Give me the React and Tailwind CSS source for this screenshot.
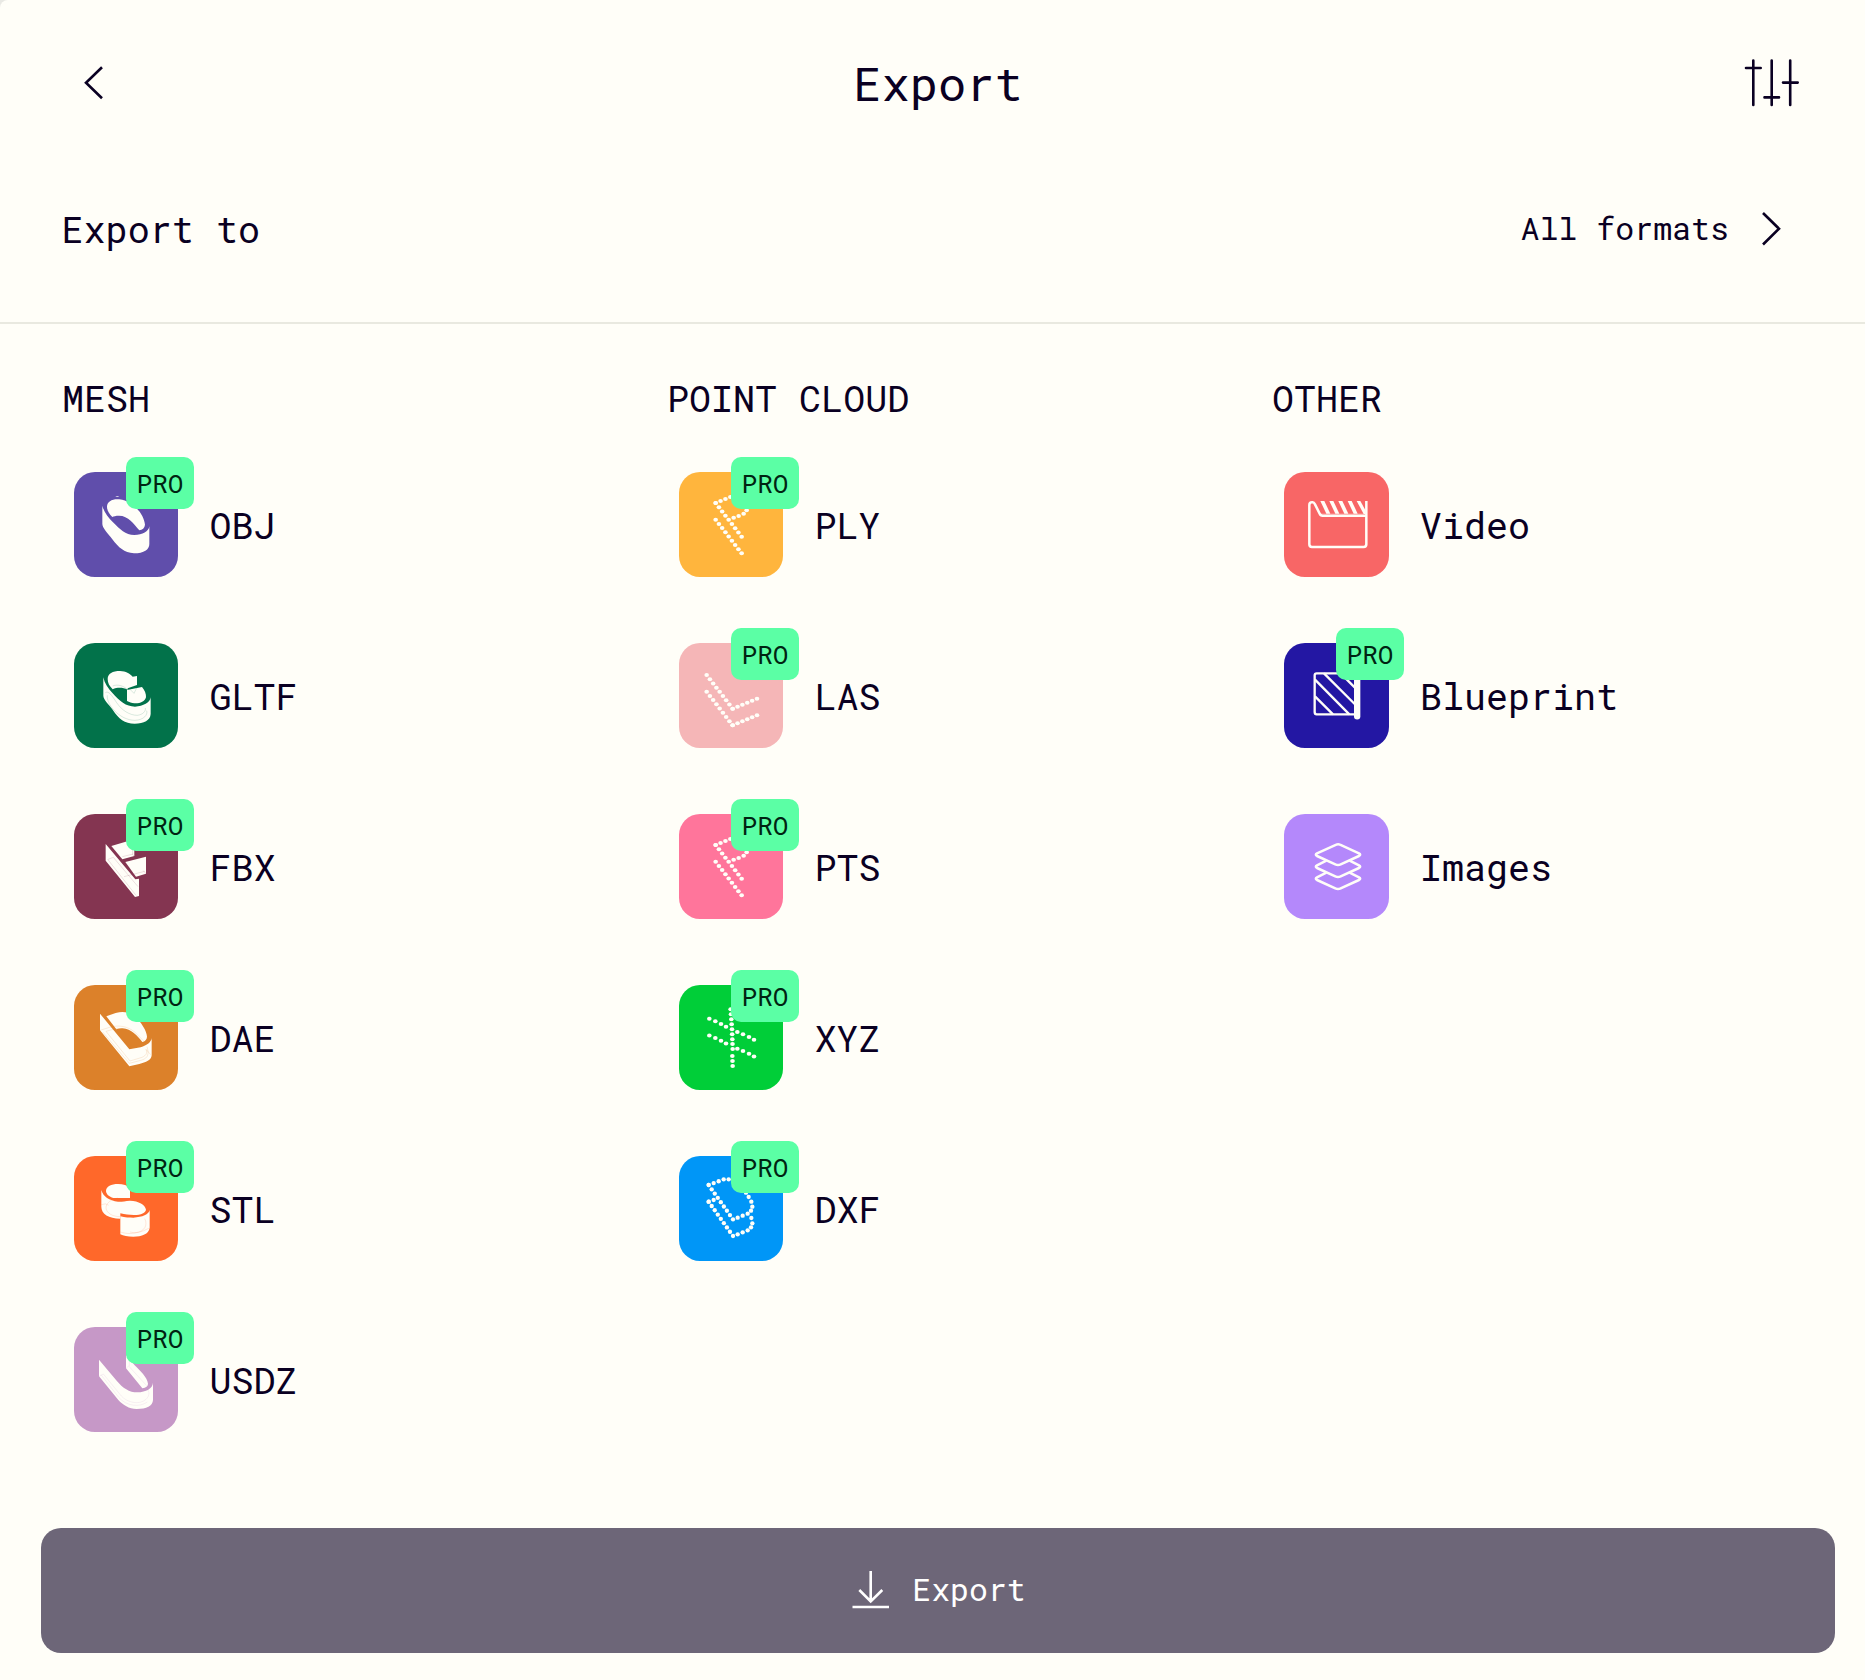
const CREAM = "#fffef8";

// Evenly spaced points from one end of a segment to the other.
const line = (x1, y1, x2, y2, n) =>
  Array.from({ length: n }, (_, i) => [
    x1 + ((x2 - x1) * i) / (n - 1),
    y1 + ((y2 - y1) * i) / (n - 1),
  ]);

const shift = (pts, dy) => pts.map(([x, y]) => [x, y + dy]);

function Art({ y, children }) {
  return (
    <svg viewBox={`72 ${y} 315 315`} className="block size-[105px]" fill={CREAM}>
      {children}
    </svg>
  );
}

function Dots({ y, points, rx = 6.9, ry = 6 }) {
  return (
    <Art y={y}>
      {points.map(([cx, cy], i) => (
        <ellipse key={i} cx={cx} cy={cy} rx={rx} ry={ry} />
      ))}
    </Art>
  );
}

const Seam = ({ d, color }) => (
  <path d={d} fill="none" stroke={color} strokeWidth="1.3" opacity="0.35" />
);

const ObjArt = () => (
  <Art y={96}>
    <path d="M196 171Q202 167 208 171Z" />
    <path d="M171 200C171 184 188 176 208 178C250 184 282 222 285 254C284 264 277 270 268 271C252 252 235 227 207 227C197 227 191 229 187 231C178 222 171 212 171 200Z" />
    <path d="M157 197C161 214 174 232 189 247C210 268 226 285 253 285C278 284 296 275 298 259V312C298 329 282 340 252 340C222 338 206 323 187 298C174 280 157 264 157 252Z" />
  </Art>
);

const GltfArt = () => (
  <Art y={609}>
    <path d="M173 717C173 701 188 693 210 693C228 694 239 700 248 710L261 708V735L233 745V749C218 742 202 742 188 748C178 738 173 729 173 717Z" />
    <path d="M231 750L276 741C284 750 289 762 288 772C284 785 270 791 253 790C245 789 238 786 231 783Z" />
    <path d="M160 712C163 729 174 745 188 760C208 783 228 800 255 800C280 798 300 789 302 772V822C301 841 282 851 254 851C224 851 206 836 188 809C176 792 160 779 160 767Z" />
    <Seam color="#02724a" d="M188 738C202 732 220 737 232 748M240 748L252 760L260 744M166 758C176 752 184 764 200 788C216 812 240 826 262 826C278 824 288 814 286 804M172 766C168 790 206 840 254 841C282 840 294 824 290 812" />
  </Art>
);

const FbxArt = () => (
  <Art y={102}>
    <path d="M167 192L256 298L267 296V348L255 351L167 242Z" />
    <path d="M184 198L232 184L253 210V228L217 238Z" />
    <path d="M226 246L288 230V281L258 290Z" />
    <Seam color="#843551" d="M173 238L258 346M174 238L190 232L264 320M217 230L250 222M248 210V224L254 230M222 290L284 274M288 281L280 272" />
  </Art>
);

const DaeArt = () => (
  <Art y={615}>
    <path d="M150 701L238 808L272 802C291 796 304 786 305 774V826C304 842 288 846 268 852L238 859L150 751Z" />
    <path d="M169 709L197 699Q225 692 246 703C272 722 290 752 291 770C291 779 284 784 277 786C262 768 244 746 218 745Q208 744 199 748Z" />
    <Seam color="#dc812a" d="M150 751L182 741C206 735 232 738 254 756L282 784M168 754L204 744M168 754L240 843L276 832C290 826 292 818 288 808L302 824M158 756L238 850L276 840C294 834 298 822 291 800" />
  </Art>
);

const StlArt = () => (
  <Art y={108}>
    <path d="M168 212C168 200 184 192 204 192C220 192 232 196 240 204V234H232L190 234C177 230 168 222 168 212Z" />
    <path d="M154 210C159 230 178 242 204 245C214 246 224 243 240 242C266 243 286 254 288 269C287 278 274 285 252 285C236 285 226 284 211 280V296C176 295 154 282 154 260Z" />
    <path d="M211 289C226 293 237 293 250 293C278 291 296 284 299 270V324C296 342 276 350 250 350C233 350 220 347 211 343Z" />
    <Seam color="#ff682a" d="M204 234C182 238 168 250 168 264C170 280 188 290 211 290M211 336C230 342 248 342 266 336C292 328 290 306 284 296M154 254Q168 248 176 256M240 336Q262 344 298 324" />
  </Art>
);

const UsdzArt = () => (
  <Art y={621}>
    <path d="M147 719L200 782C218 804 238 817 262 817C288 816 308 806 309 788V840C308 858 290 867 260 867C236 866 220 856 205 840L147 769Z" />
    <path d="M228 705L254 736C270 752 292 772 294 791C294 799 288 803 277 805L228 745Z" />
    <Seam color="#c698c7" d="M147 769L160 762L214 828C232 848 268 856 288 838C300 826 298 816 292 808M153 764L206 832C230 860 270 862 292 846M228 745L236 738L290 797M238 716V738" />
  </Art>
);

const pBase = [
  ...line(182, 189, 226, 171, 4),
  ...line(182, 189, 260, 290, 9),
  ...line(182, 239, 260, 340, 9),
  [236, 233],
  [251, 228],
  [266, 221],
  [275, 211],
];
const PlyArt = () => <Dots y={96} points={pBase} />;

const lasTop = [...line(155, 705, 233, 806, 9), ...line(233, 806, 306, 776, 6)];
const LasArt = () => <Dots y={609} points={[...lasTop, ...shift(lasTop, 50)]} />;

const slant = [
  [163, 716],
  [181, 724],
  [198, 732],
  [213, 740],
  [247, 756],
  [264, 763],
  [282, 771],
  [297, 779],
];
const XyzArt = () => (
  <Dots
    y={615}
    points={[
      ...slant,
      ...shift(slant, 50.3),
      ...line(227, 688, 230, 733, 4),
      ...line(231, 748, 233, 807, 5),
      ...line(232, 828, 233, 858, 3),
    ]}
  />
);

const DxfArt = () => (
  <Dots
    y={108}
    rx={6.5}
    ry={6.5}
    points={[
      ...line(161, 195, 206, 178, 4),
      [221, 178],
      ...line(161, 195, 234, 298, 9),
      ...line(248, 293, 278, 281, 3),
      [288, 272],
      [292, 260],
      [289, 245],
      [281, 231],
      [273, 218],
      [161, 245],
      [176, 240],
      ...line(161, 245, 234, 348, 9),
      ...line(248, 343, 278, 331, 3),
      [288, 322],
      [292, 310],
      [289, 294],
    ]}
  />
);

const VideoArt = () => (
  <Art y={96}>
    <g fill="none" stroke={CREAM} strokeWidth="6.5">
      <path d="M319 183V313Q319 321 311 321H156Q148 321 148 313V195Q148 187 156 187H158Q162 187 165 193L179 221Q181 227 188 227H318" strokeWidth="7.5" />
      <path d="M181 222H317" strokeWidth="2" opacity="0.5" />
    </g>
    {[181, 208, 235, 263, 290].map((x) => (
      <path key={x} d={x > 280 ? `M${x} 183H${x + 11}L317 212V222H311Z` : `M${x} 183H${x + 12}L${x + 30} 221H${x + 18}Z`} />
    ))}
  </Art>
);

const BlueprintArt = () => (
  <Art y={609}>
    <g fill="none" stroke={CREAM} strokeWidth="7">
      <path d="M284 700H170Q164 700 164 706V816Q164 823 170 823H284" />
      <path d="M165 769L219 823M165 719L268 823M192 700L284 792M242 700L284 742" />
    </g>
    <path d="M282 700H301V829A9.500 9.500 0 0 1 282 829Z" />
  </Art>
);

const ImagesArt = () => (
  <Art y={1122}>
    <g fill="none" stroke={CREAM} strokeWidth="7.5" strokeLinejoin="round">
      <path d="M229 1214Q234 1211 240 1214L297 1240Q304 1244 297 1248L242 1273Q234 1277 226 1273L171 1248Q164 1244 171 1240Z" />
      <path d="M199 1262L171 1276Q164 1280 171 1284L226 1309Q234 1313 242 1309L297 1284Q304 1280 297 1276L269 1262" />
      <path d="M199 1298L171 1312Q164 1316 171 1320L226 1345Q234 1349 242 1345L297 1320Q304 1316 297 1312L269 1298" />
    </g>
  </Art>
);

const groups = [
  {
    title: "MESH",
    tile: "w-[104px]",
    gap: "gap-[31.5px]",
    items: [
      { label: "OBJ", bg: "bg-[#604eab]", pro: true, Icon: ObjArt },
      { label: "GLTF", bg: "bg-[#02724a]", pro: false, Icon: GltfArt },
      { label: "FBX", bg: "bg-[#843551]", pro: true, Icon: FbxArt },
      { label: "DAE", bg: "bg-[#dc812a]", pro: true, Icon: DaeArt },
      { label: "STL", bg: "bg-[#ff682a]", pro: true, Icon: StlArt },
      { label: "USDZ", bg: "bg-[#c698c7]", pro: true, Icon: UsdzArt },
    ],
  },
  {
    title: "POINT CLOUD",
    tile: "w-[104px]",
    gap: "gap-[31.5px]",
    items: [
      { label: "PLY", bg: "bg-[#ffb53d]", pro: true, Icon: PlyArt },
      { label: "LAS", bg: "bg-[#f5b6b7]", pro: true, Icon: LasArt },
      { label: "PTS", bg: "bg-[#ff759b]", pro: true, Icon: PlyArt },
      { label: "XYZ", bg: "bg-[#00ce38]", pro: true, Icon: XyzArt },
      { label: "DXF", bg: "bg-[#0096f7]", pro: true, Icon: DxfArt },
    ],
  },
  {
    title: "OTHER",
    tile: "w-[105px]",
    gap: "gap-[31px]",
    items: [
      { label: "Video", bg: "bg-[#f86666]", pro: false, Icon: VideoArt },
      { label: "Blueprint", bg: "bg-[#2317a3]", pro: true, Icon: BlueprintArt },
      { label: "Images", bg: "bg-[#b488fb]", pro: false, Icon: ImagesArt },
    ],
  },
];

function Format({ label, bg, pro, Icon, tile, gap }) {
  return (
    <li className={`flex h-[105px] items-center ${gap}`}>
      <div className={`relative h-[105px] shrink-0 rounded-[21px] ${tile} ${bg}`}>
        <Icon />
        {pro && (
          <span className="absolute -top-[15px] left-[52px] flex h-[52px] w-[68px] items-center justify-center rounded-[10px] bg-[#5bffa5] text-[26.1px] leading-none text-[#002412]">
            PRO
          </span>
        )}
      </div>
      <span className="pt-px text-[36.7px] leading-none">{label}</span>
    </li>
  );
}

export default function App() {
  return (
    <div className="h-[1680px] w-[1865px] overflow-hidden bg-[#e9e9e4]">
      <main className="flex h-[1680px] w-[1876px] flex-col rounded-tl-[8px] bg-[#fffef8] font-['Roboto_Mono','DejaVu_Sans_Mono',monospace] text-[#0a0022]">
        <header className="flex h-[166px] items-center justify-between pr-[75px] pl-[82px]">
          <button aria-label="Back" className="w-[50px]">
            <svg width="24" height="36" viewBox="82 65 24 36" fill="none" stroke="currentColor" strokeWidth="2.6">
              <path d="M102 67.300L86 82.700L102 98.300" />
            </svg>
          </button>
          <h1 className="pt-px text-[47.1px] leading-none">Export</h1>
          <button aria-label="Settings">
            <svg width="57" height="50" viewBox="1744 58 57 50" fill="none" stroke="currentColor" strokeWidth="2.6" strokeLinecap="round">
              <path d="M1753.300 60.500V105M1771.700 60.500V105M1790.200 60.500V105M1746 68H1760.700M1764.500 97.400H1779M1783 82.600H1797.700" />
            </svg>
          </button>
        </header>
        <section className="flex h-[158px] items-center justify-between border-b-2 border-[#e9e9e0] pr-[93px] pb-[31px] pl-[61.5px]">
          <h2 className="pt-[2px] text-[36.75px] leading-none">Export to</h2>
          <button className="flex items-center gap-[32px] text-[31.6px] leading-none">
            All formats
            <svg width="22" height="36" viewBox="1761 211 22 36" fill="none" stroke="currentColor" strokeWidth="2.6">
              <path d="M1763 213L1779 228.700L1763 244.500" />
            </svg>
          </button>
        </section>
        <section className="grid grid-cols-[605px_605px_1fr] pt-[56px] pl-[62px]">
          {groups.map(({ title, items, tile, gap }) => (
            <div key={title}>
              <h3 className="h-[92px] text-[36.7px] leading-9">{title}</h3>
              <ul className="flex flex-col gap-[66px] pl-3">
                {items.map((item) => (
                  <Format key={item.label} tile={tile} gap={gap} {...item} />
                ))}
              </ul>
            </div>
          ))}
        </section>
        <button className="mx-[41px] mt-auto mb-[27px] flex h-[125px] items-center justify-center gap-[22px] rounded-[20px] bg-[#6d6678] pl-[2px] text-[31.5px] leading-none text-white">
          <svg width="38" height="40" viewBox="852 1571 38 40" fill="none" stroke="currentColor" strokeWidth="2.6">
            <path d="M870.700 1571V1601M859.300 1590L870.700 1601.500L882.300 1590M852.500 1607H889" />
          </svg>
          <span className="-mt-px">Export</span>
        </button>
      </main>
    </div>
  );
}
